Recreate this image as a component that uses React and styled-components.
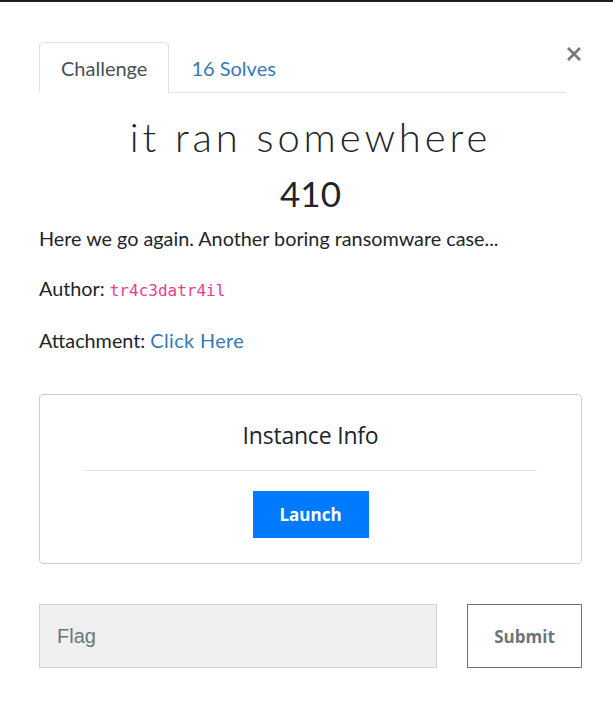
import { useState } from 'react';
import styled, { createGlobalStyle } from 'styled-components';

const GlobalStyle = createGlobalStyle`
  html, body {
    margin: 0;
    padding: 0;
    background: #fff;
  }
  body {
    font-family: Lato, "Noto Sans", sans-serif;
    color: #212529;
  }
  * {
    box-sizing: border-box;
  }
`;

const TopBar = styled.div`
  height: 2px;
  background: #1c1e21;
`;

const ModalBody = styled.div`
  padding: 40px 31px 40px 39px;
`;

const HeaderRow = styled.div`
  display: flex;
  align-items: flex-start;
`;

const TabNav = styled.div`
  flex: 1;
  display: flex;
  border-bottom: 1px solid #e3e3e3;
`;

const Tab = styled.button`
  height: 51px;
  margin-bottom: -1px;
  padding: 0 21px;
  border: 1px solid ${(p) => (p.$active ? '#e3e3e3' : 'transparent')};
  border-bottom-color: ${(p) => (p.$active ? '#fff' : 'transparent')};
  border-radius: 4px 4px 0 0;
  background: ${(p) => (p.$active ? '#fff' : 'transparent')};
  font-family: Lato, sans-serif;
  font-size: 20px;
  color: ${(p) => (p.$active ? '#495057' : '#337ab7')};
  cursor: pointer;
`;

const CloseButton = styled.button`
  width: 16px;
  margin-top: 4px;
  padding: 0;
  border: none;
  background: none;
  cursor: pointer;
  color: #777;
  line-height: 0;
`;

const Title = styled.h3`
  margin: 20px 0 0;
  text-align: center;
  font-family: Lato, sans-serif;
  font-weight: 300;
  font-size: 40px;
  line-height: 48px;
  letter-spacing: 3.9px;
  color: #212529;
`;

const Value = styled.h4`
  margin: 12px 0 0;
  text-align: center;
  font-family: Lato, sans-serif;
  font-weight: 400;
  font-size: 35px;
  line-height: 40px;
  color: #212529;
`;

const Text = styled.p`
  margin: 12px 0 23px;
  font-size: 19.8px;
  line-height: 27px;

  & + & {
    margin-top: 0;
  }
`;

const Code = styled.code`
  font-family: "DejaVu Sans Mono", "Liberation Mono", monospace;
  font-size: 16px;
  color: #e83e8c;
`;

const Link = styled.a`
  color: #337ab7;
  text-decoration: none;
  letter-spacing: 0.4px;
`;

const InstanceCard = styled.div`
  margin-top: 40px;
  border: 1px solid #cfcfcf;
  border-radius: 4px;
  padding: 24px 44px 25px;
  display: flex;
  flex-direction: column;
  align-items: center;
`;

const CardTitle = styled.div`
  font-family: "Open Sans", sans-serif;
  font-size: 23px;
  line-height: 32px;
  color: #212529;
  letter-spacing: -0.2px;
`;

const Divider = styled.hr`
  align-self: stretch;
  margin: 19px 0 20px;
  border: none;
  border-top: 1px solid #e5e5e5;
`;

const LaunchButton = styled.button`
  width: 116px;
  height: 47px;
  border: none;
  background: #007bff;
  color: #fff;
  font-family: "Open Sans", sans-serif;
  font-weight: 700;
  font-size: 17px;
  cursor: pointer;
`;

const SubmitRow = styled.div`
  margin-top: 40px;
  display: flex;
  gap: 30px;
`;

const FlagInput = styled.input`
  flex: 1;
  height: 64px;
  padding: 0 17px;
  border: 1px solid #d0d4d8;
  background: #efefef;
  font-family: "Liberation Sans", Arial, sans-serif;
  font-size: 20px;
  color: #495057;
  outline: none;

  &::placeholder {
    color: #6c757d;
  }
`;

const SubmitButton = styled.button`
  width: 115px;
  height: 64px;
  border: 1px solid #6c757d;
  background: #fff;
  color: #6c757d;
  font-family: "Open Sans", sans-serif;
  font-weight: 700;
  font-size: 17px;
  cursor: pointer;
`;

export default function App() {
    const [tab, setTab] = useState('challenge');
    const [flag, setFlag] = useState('');

    return (
        <>
            <GlobalStyle />
            <TopBar />
            <ModalBody>
                <HeaderRow>
                    <TabNav>
                        <Tab $active={tab === 'challenge'} onClick={() => setTab('challenge')}>
                            Challenge
                        </Tab>
                        <Tab $active={tab === 'solves'} onClick={() => setTab('solves')}>
                            16 Solves
                        </Tab>
                    </TabNav>
                    <CloseButton aria-label="Close">
                        <svg width="16" height="16" viewBox="0 0 16 16">
                            <path d="M2 2 L14 14 M14 2 L2 14" stroke="currentColor" strokeWidth="2.6" />
                        </svg>
                    </CloseButton>
                </HeaderRow>

                <Title>it ran somewhere</Title>
                <Value>410</Value>

                <Text>Here we go again. Another boring ransomware case...</Text>
                <Text>
                    Author: <Code>tr4c3datr4il</Code>
                </Text>
                <Text>
                    Attachment: <Link href="#">Click Here</Link>
                </Text>

                <InstanceCard>
                    <CardTitle>Instance Info</CardTitle>
                    <Divider />
                    <LaunchButton>Launch</LaunchButton>
                </InstanceCard>

                <SubmitRow>
                    <FlagInput
                        placeholder="Flag"
                        value={flag}
                        onChange={(e) => setFlag(e.target.value)}
                    />
                    <SubmitButton>Submit</SubmitButton>
                </SubmitRow>
            </ModalBody>
        </>
    );
}
